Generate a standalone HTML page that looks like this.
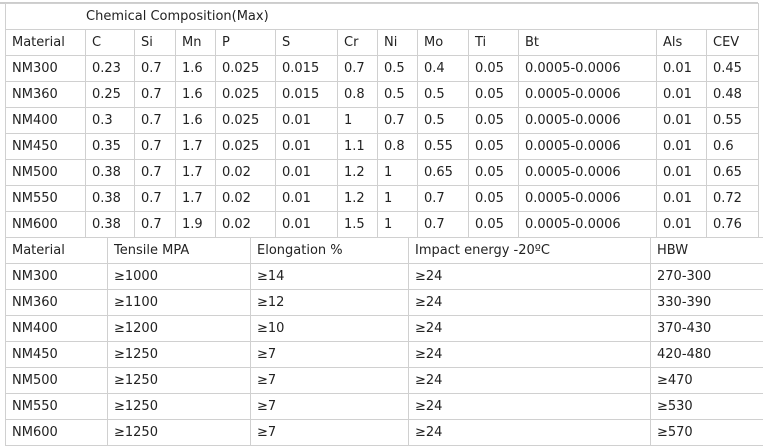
<!DOCTYPE html>
<html><head><style>
body{margin:0;background:#fff;width:763px;height:445px;overflow:hidden;position:relative;font-family:"DejaVu Sans",Verdana,sans-serif;font-size:13px;color:#222}
table{position:absolute;border-collapse:collapse;table-layout:fixed}
td{border:1px solid #d0d0d0;height:25px;padding:0 0 0 6px;white-space:nowrap;overflow:hidden;line-height:25px}
#t1{left:5px;top:3px;width:753px}
#t2{left:5px;top:237px;width:765px}
#top{position:absolute;left:0;top:0;width:758px;height:2px;border-bottom:2px solid #ccc}
</style></head><body>
<div id="top"></div>
<table id="t1">
<colgroup><col style="width:80px"><col style="width:49px"><col style="width:41px"><col style="width:40px"><col style="width:60px"><col style="width:62px"><col style="width:40px"><col style="width:40px"><col style="width:51px"><col style="width:50px"><col style="width:138px"><col style="width:50px"><col style="width:52px"></colgroup>
<tr><td colspan="13" style="padding-left:80px">Chemical Composition(Max)</td></tr>
<tr><td>Material</td><td>C</td><td>Si</td><td>Mn</td><td>P</td><td>S</td><td>Cr</td><td>Ni</td><td>Mo</td><td>Ti</td><td>Bt</td><td>Als</td><td>CEV</td></tr>
<tr><td>NM300</td><td>0.23</td><td>0.7</td><td>1.6</td><td>0.025</td><td>0.015</td><td>0.7</td><td>0.5</td><td>0.4</td><td>0.05</td><td>0.0005-0.0006</td><td>0.01</td><td>0.45</td></tr>
<tr><td>NM360</td><td>0.25</td><td>0.7</td><td>1.6</td><td>0.025</td><td>0.015</td><td>0.8</td><td>0.5</td><td>0.5</td><td>0.05</td><td>0.0005-0.0006</td><td>0.01</td><td>0.48</td></tr>
<tr><td>NM400</td><td>0.3</td><td>0.7</td><td>1.6</td><td>0.025</td><td>0.01</td><td>1</td><td>0.7</td><td>0.5</td><td>0.05</td><td>0.0005-0.0006</td><td>0.01</td><td>0.55</td></tr>
<tr><td>NM450</td><td>0.35</td><td>0.7</td><td>1.7</td><td>0.025</td><td>0.01</td><td>1.1</td><td>0.8</td><td>0.55</td><td>0.05</td><td>0.0005-0.0006</td><td>0.01</td><td>0.6</td></tr>
<tr><td>NM500</td><td>0.38</td><td>0.7</td><td>1.7</td><td>0.02</td><td>0.01</td><td>1.2</td><td>1</td><td>0.65</td><td>0.05</td><td>0.0005-0.0006</td><td>0.01</td><td>0.65</td></tr>
<tr><td>NM550</td><td>0.38</td><td>0.7</td><td>1.7</td><td>0.02</td><td>0.01</td><td>1.2</td><td>1</td><td>0.7</td><td>0.05</td><td>0.0005-0.0006</td><td>0.01</td><td>0.72</td></tr>
<tr><td>NM600</td><td>0.38</td><td>0.7</td><td>1.9</td><td>0.02</td><td>0.01</td><td>1.5</td><td>1</td><td>0.7</td><td>0.05</td><td>0.0005-0.0006</td><td>0.01</td><td>0.76</td></tr>
</table>
<table id="t2">
<colgroup><col style="width:102px"><col style="width:143px"><col style="width:158px"><col style="width:242px"><col style="width:120px"></colgroup>
<tr><td>Material</td><td>Tensile MPA</td><td>Elongation %</td><td>Impact energy -20ºC</td><td>HBW</td></tr>
<tr><td>NM300</td><td>≥1000</td><td>≥14</td><td>≥24</td><td>270-300</td></tr>
<tr><td>NM360</td><td>≥1100</td><td>≥12</td><td>≥24</td><td>330-390</td></tr>
<tr><td>NM400</td><td>≥1200</td><td>≥10</td><td>≥24</td><td>370-430</td></tr>
<tr><td>NM450</td><td>≥1250</td><td>≥7</td><td>≥24</td><td>420-480</td></tr>
<tr><td>NM500</td><td>≥1250</td><td>≥7</td><td>≥24</td><td>≥470</td></tr>
<tr><td>NM550</td><td>≥1250</td><td>≥7</td><td>≥24</td><td>≥530</td></tr>
<tr><td>NM600</td><td>≥1250</td><td>≥7</td><td>≥24</td><td>≥570</td></tr>
</table>
</body></html>
